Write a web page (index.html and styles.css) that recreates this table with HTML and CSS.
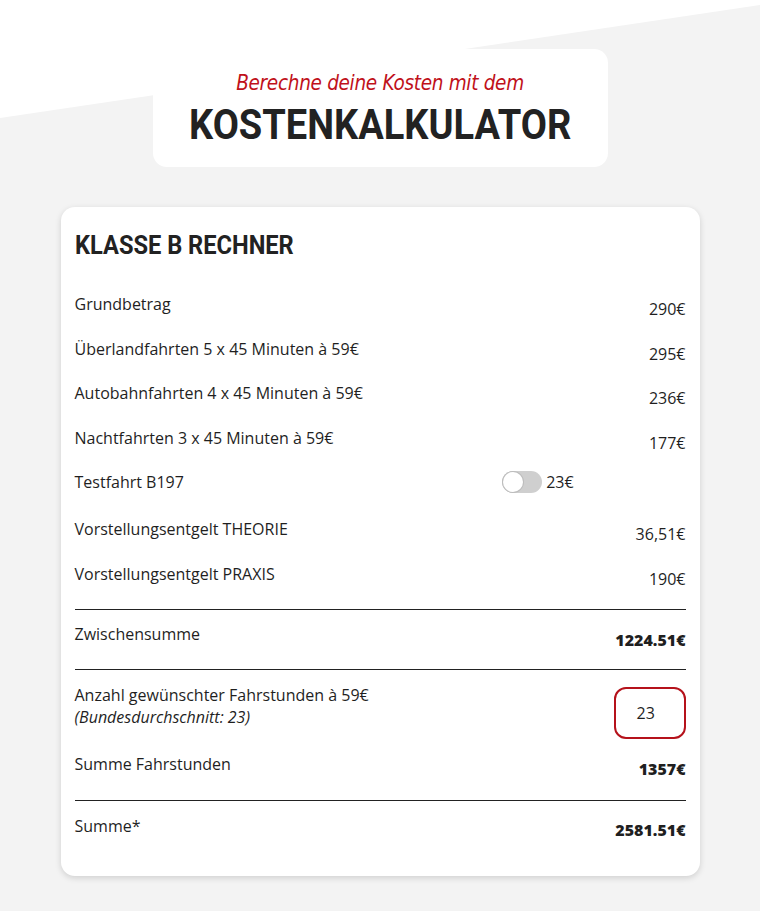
FILE: index.html
```html
<!DOCTYPE html>
<html lang="de">
<head>
<meta charset="utf-8">
<title>Kostenkalkulator</title>
<link rel="stylesheet" href="styles.css">
</head>
<body>
<div class="bg-shape"></div>
<main class="page">
  <header class="hero">
    <p class="hero-sub">Berechne deine Kosten mit dem</p>
    <h1 class="hero-title">KOSTENKALKULATOR</h1>
  </header>

  <section class="card">
    <h2 class="card-title">KLASSE B RECHNER</h2>

    <div class="row"><span class="label">Grundbetrag</span><span class="value">290€</span></div>
    <div class="row"><span class="label">Überlandfahrten 5 x 45 Minuten à 59€</span><span class="value">295€</span></div>
    <div class="row"><span class="label">Autobahnfahrten 4 x 45 Minuten à 59€</span><span class="value">236€</span></div>
    <div class="row"><span class="label">Nachtfahrten 3 x 45 Minuten à 59€</span><span class="value">177€</span></div>
    <div class="row row-toggle">
      <span class="label label-wide">Testfahrt B197</span>
      <span class="toggle-group"><span class="toggle"><span class="knob"></span></span><span class="toggle-price">23€</span></span>
    </div>
    <div class="row"><span class="label">Vorstellungsentgelt THEORIE</span><span class="value">36,51€</span></div>
    <div class="row row-last"><span class="label">Vorstellungsentgelt PRAXIS</span><span class="value">190€</span></div>

    <hr class="divider">
    <div class="row row-sum"><span class="label">Zwischensumme</span><span class="value strong">1224.51€</span></div>
    <hr class="divider">

    <div class="row row-input">
      <span class="label">Anzahl gewünschter Fahrstunden à 59€<br><em>(Bundesdurchschnitt: 23)</em></span>
      <span class="input-box">23</span>
    </div>
    <div class="row row-sum2"><span class="label">Summe Fahrstunden</span><span class="value strong">1357€</span></div>
    <hr class="divider">
    <div class="row row-total"><span class="label">Summe*</span><span class="value strong">2581.51€</span></div>
  </section>
</main>
</body>
</html>
```

FILE: styles.css
```css
* { box-sizing: border-box; }
html, body { margin: 0; padding: 0; }
body {
  background: #f3f3f3;
  font-family: "Open Sans", "Liberation Sans", sans-serif;
  color: #1f1f1f;
  min-height: 911px;
  position: relative;
}
.bg-shape {
  position: absolute;
  top: 0; left: 0; right: 0;
  height: 120px;
  background: #ffffff;
  clip-path: polygon(0 0, 100% 0, 100% 5px, 0 118px);
  z-index: 0;
}
.page {
  position: relative;
  z-index: 1;
  padding-top: 49px;
  display: flex;
  flex-direction: column;
  align-items: center;
}
.hero {
  width: 455px;
  height: 118px;
  background: #fff;
  border-radius: 14px;
  text-align: center;
  padding-top: 20px;
}
.hero-sub {
  margin: 0;
  font-family: "DejaVu Sans Condensed", "DejaVu Sans", sans-serif;
  font-style: italic;
  font-size: 20.5px;
  line-height: 28px;
  color: #c0111a;
  letter-spacing: -0.3px;
}
.hero-title {
  margin: 4px 0 0;
  font-family: "Roboto", sans-serif;
  font-weight: 700;
  font-size: 42px;
  line-height: 48px;
  color: #222;
  display: inline-block;
  transform: scaleX(0.905);
}
.card {
  margin-top: 40px;
  width: 639px;
  background: #fff;
  border-radius: 14px;
  box-shadow: 0 2px 6px rgba(0,0,0,0.15);
  padding: 23px 14px 35px;
}
.card-title {
  margin: 0 0 31px;
  font-family: "Roboto", sans-serif;
  font-weight: 700;
  font-size: 25px;
  line-height: 32px;
  color: #222;
  transform: scaleX(0.945);
  transform-origin: left center;
}
.row {
  display: flex;
  justify-content: space-between;
  align-items: flex-start;
  font-size: 16px;
  line-height: 22px;
  min-height: 44.6px;
}
.value { padding-top: 5px; }
.strong { font-weight: 800; font-size: 16px; padding-top: 6px; }
.row-toggle { justify-content: flex-start; min-height: 47px; }
.label-wide { width: 70%; }
.row-last { min-height: 46px; }
.toggle-group {
  display: flex;
  align-items: center;
  gap: 4px;
}
.toggle {
  width: 40px;
  height: 22px;
  border-radius: 11px;
  background: #cfcfcf;
  position: relative;
  display: inline-block;
}
.knob {
  position: absolute;
  top: 1px; left: 1px;
  width: 20px; height: 20px;
  border-radius: 50%;
  background: #fff;
  box-shadow: 0 0 0 1px #bdbdbd;
}
.divider {
  border: 0;
  border-top: 1.5px solid #222;
  margin: 0;
}
.row-sum { min-height: 0; padding: 13.5px 0 18px; }
.row-input { min-height: 0; padding: 13.5px 0 14px; }
.row-input em { font-style: italic; }
.input-box {
  width: 72px;
  height: 52px;
  border: 2px solid #b5121b;
  border-radius: 12px;
  display: flex;
  align-items: center;
  padding-left: 21px;
  margin-top: 3px;
}
.row-sum2 { min-height: 0; padding: 0 0 20px; }
.row-sum2 .strong { padding-top: 5px; }
.row-total { min-height: 0; padding: 14.5px 0 0; }
.row-total .strong { padding-top: 4px; }
```
